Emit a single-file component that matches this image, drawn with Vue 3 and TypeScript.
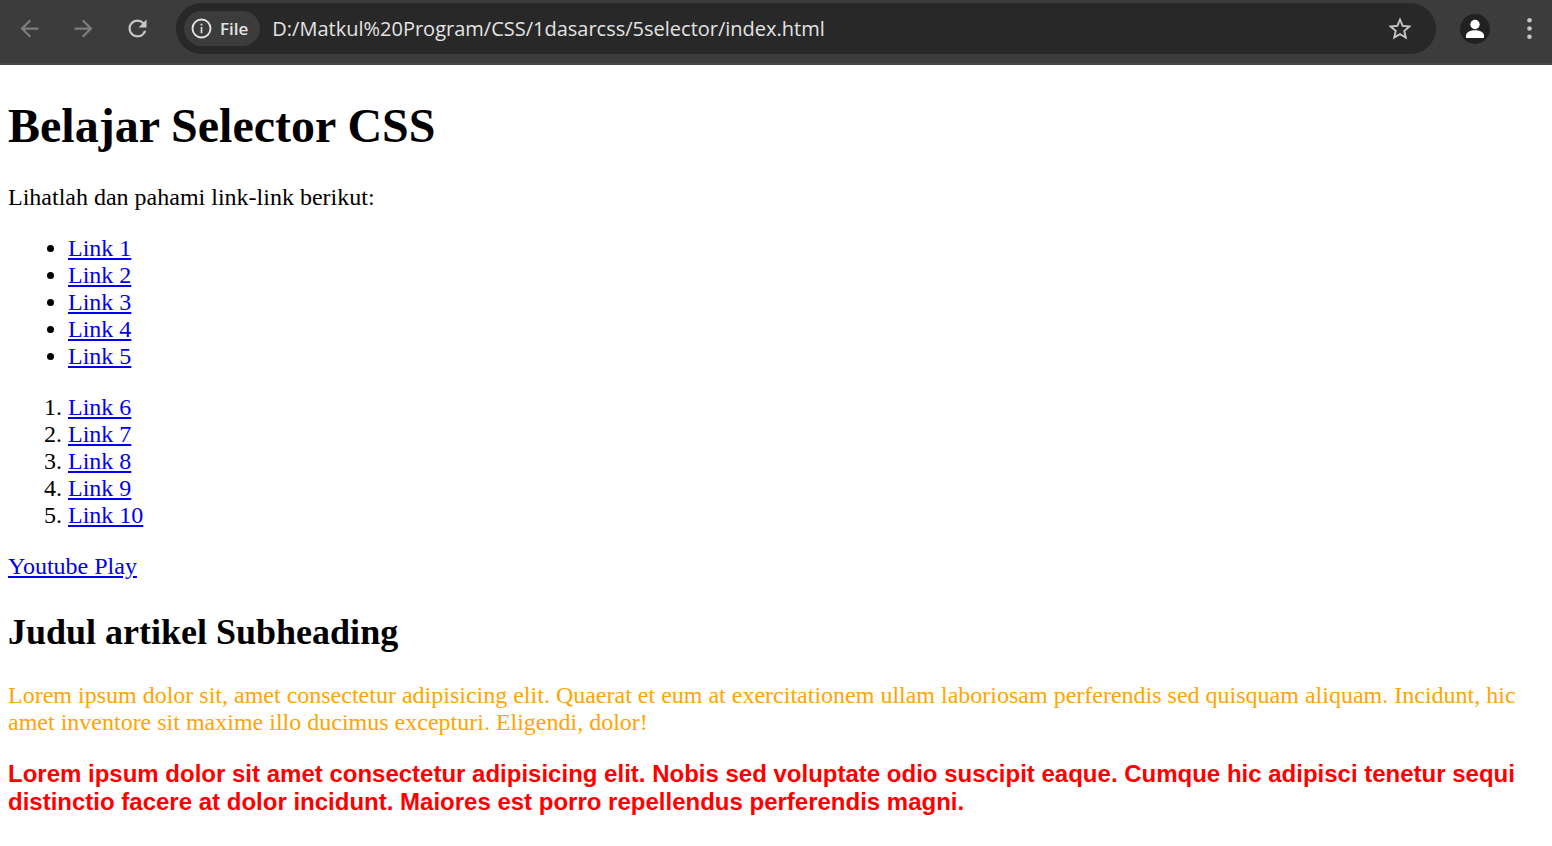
<script setup lang="ts">
import { ref } from 'vue'

const address = ref<string>('D:/Matkul%20Program/CSS/1dasarcss/5selector/index.html')
const bulletLinks: string[] = ['Link 1', 'Link 2', 'Link 3', 'Link 4', 'Link 5']
const numberedLinks: string[] = ['Link 6', 'Link 7', 'Link 8', 'Link 9', 'Link 10']
</script>

<template>
  <div class="browser">
    <header class="toolbar">
      <nav class="buttons" aria-label="Navigation">
        <button type="button" class="tool dim" aria-label="Back">
          <svg class="icon" viewBox="0 -960 960 960"><path d="m313-440 224 224-57 56-320-320 320-320 57 56-224 224h487v80H313Z" /></svg>
        </button>
        <button type="button" class="tool dim" aria-label="Forward">
          <svg class="icon" viewBox="0 -960 960 960"><path d="M647-440H160v-80h487L423-744l57-56 320 320-320 320-57-56 224-224Z" /></svg>
        </button>
        <button type="button" class="tool" aria-label="Reload">
          <svg class="icon" viewBox="0 0 24 24"><path d="M17.650 6.350A7.958 7.958 0 0 0 12 4c-4.420 0-7.990 3.580-7.990 8s3.570 8 7.990 8c3.730 0 6.840-2.550 7.730-6h-2.080A5.990 5.990 0 0 1 12 18c-3.310 0-6-2.690-6-6s2.690-6 6-6c1.660 0 3.140.690 4.220 1.780L13 11h7V4l-2.350 2.350z" /></svg>
        </button>
      </nav>
      <div class="omnibox">
        <button type="button" class="chip">
          <svg class="info" viewBox="0 0 21 21">
            <circle cx="10.500" cy="10.500" r="9" fill="none" stroke="currentColor" stroke-width="1.900" />
            <path d="M9.700 9h1.600v6.200H9.700zM9.600 5.800h1.800v1.800H9.600z" />
          </svg>
          <span>File</span>
        </button>
        <input v-model="address" class="address" type="text" aria-label="Address" spellcheck="false" />
        <button type="button" class="tool" aria-label="Bookmark this page">
          <svg class="star" viewBox="0 0 24 24"><path d="M22 9.240l-7.190-.620L12 2 9.190 8.630 2 9.240l5.460 4.730L5.820 21 12 17.270 18.180 21l-1.630-7.030L22 9.240zM12 15.400l-3.760 2.270 1-4.280-3.320-2.880 4.380-.380L12 6.100l1.710 4.040 4.380.380-3.320 2.880 1 4.280L12 15.400z" /></svg>
        </button>
      </div>
      <div class="buttons">
        <button type="button" class="tool" aria-label="Profile">
          <svg class="avatar" viewBox="0 0 30 30">
            <circle cx="15" cy="15" r="15" fill="#202222" />
            <circle cx="15" cy="10.500" r="4.700" fill="#fff" />
            <path d="M6 24v-2.500C6 18 11 16.300 15 16.300s9 1.700 9 5.200V24z" fill="#fff" />
          </svg>
        </button>
        <button type="button" class="tool" aria-label="Menu">
          <svg class="icon" viewBox="0 0 27 27">
            <circle cx="13.500" cy="5.200" r="2.300" />
            <circle cx="13.500" cy="13.500" r="2.300" />
            <circle cx="13.500" cy="21.800" r="2.300" />
          </svg>
        </button>
      </div>
    </header>

    <main class="page">
      <h1>Belajar Selector CSS</h1>
      <p>Lihatlah dan pahami link-link berikut:</p>
      <ul>
        <li v-for="link in bulletLinks" :key="link"><a href="#">{{ link }}</a></li>
      </ul>
      <ol>
        <li v-for="link in numberedLinks" :key="link"><a href="#">{{ link }}</a></li>
      </ol>
      <a href="#">Youtube Play</a>
      <h2>Judul artikel Subheading</h2>
      <p class="orange">
        Lorem ipsum dolor sit, amet consectetur adipisicing elit. Quaerat et eum at exercitationem ullam laboriosam
        perferendis sed quisquam aliquam. Incidunt, hic amet inventore sit maxime illo ducimus excepturi. Eligendi, dolor!
      </p>
      <p class="red">
        Lorem ipsum dolor sit amet consectetur adipisicing elit. Nobis sed voluptate odio suscipit eaque. Cumque hic
        adipisci tenetur sequi distinctio facere at dolor incidunt. Maiores est porro repellendus perferendis magni.
      </p>
    </main>
  </div>
</template>

<style>
body {
  margin: 0;
  background: #fff;
}
</style>

<style scoped>
.toolbar {
  display: flex;
  align-items: center;
  gap: 16px;
  box-sizing: border-box;
  padding: 3px 0 9px 6px;
  border-bottom: 2px solid #484848;
  background: #3c3c3c;
  font-family: "Open Sans", "Noto Sans", sans-serif;
}

.buttons {
  display: flex;
  gap: 8px;
}

.tool {
  display: flex;
  align-items: center;
  justify-content: center;
  flex: none;
  width: 46px;
  height: 46px;
  padding: 0;
  border: 0;
  border-radius: 50%;
  background: none;
  color: #c7c7c7;
}

.tool.dim {
  color: #7c7c7c;
}

.icon {
  width: 27px;
  height: 27px;
  fill: currentColor;
}

.star {
  width: 28px;
  height: 28px;
  fill: currentColor;
}

.avatar {
  width: 30px;
  height: 30px;
}

.omnibox {
  display: flex;
  align-items: center;
  flex: 1;
  min-width: 0;
  box-sizing: border-box;
  height: 51px;
  padding: 0 13px 0 8px;
  border-radius: 26px;
  background: #282828;
}

.chip {
  display: flex;
  align-items: center;
  gap: 8px;
  flex: none;
  height: 35px;
  padding: 0 12px 0 7px;
  border: 0;
  border-radius: 18px;
  background: #3c3c3c;
  color: #e3e3e3;
  font: 600 17px/24px "Open Sans", "Noto Sans", sans-serif;
}

.info {
  width: 21px;
  height: 21px;
  fill: currentColor;
}

.address {
  flex: 1;
  min-width: 0;
  height: 35px;
  padding: 0 0 0 12px;
  border: 0;
  outline: 0;
  background: none;
  color: #e3e3e3;
  font: 400 20px/28px "Open Sans", "Noto Sans", sans-serif;
}

.page {
  margin: 32px 8px 8px;
  color: #000;
  font: 24px/27px "Liberation Serif", "Times New Roman", serif;
}

h1 {
  margin: 0 0 30px;
  font-size: 48px;
  line-height: 57px;
}

h2 {
  margin: 30px 0 28px;
  font-size: 36px;
  line-height: 44px;
}

p,
ul,
ol {
  margin: 24px 0;
}

ul,
ol {
  padding-left: 60px;
}

a {
  color: #00e;
}

.orange {
  color: orange;
}

.red {
  color: red;
  font-family: "Liberation Sans", Arial, sans-serif;
  font-weight: 700;
  line-height: 28px;
}
</style>
